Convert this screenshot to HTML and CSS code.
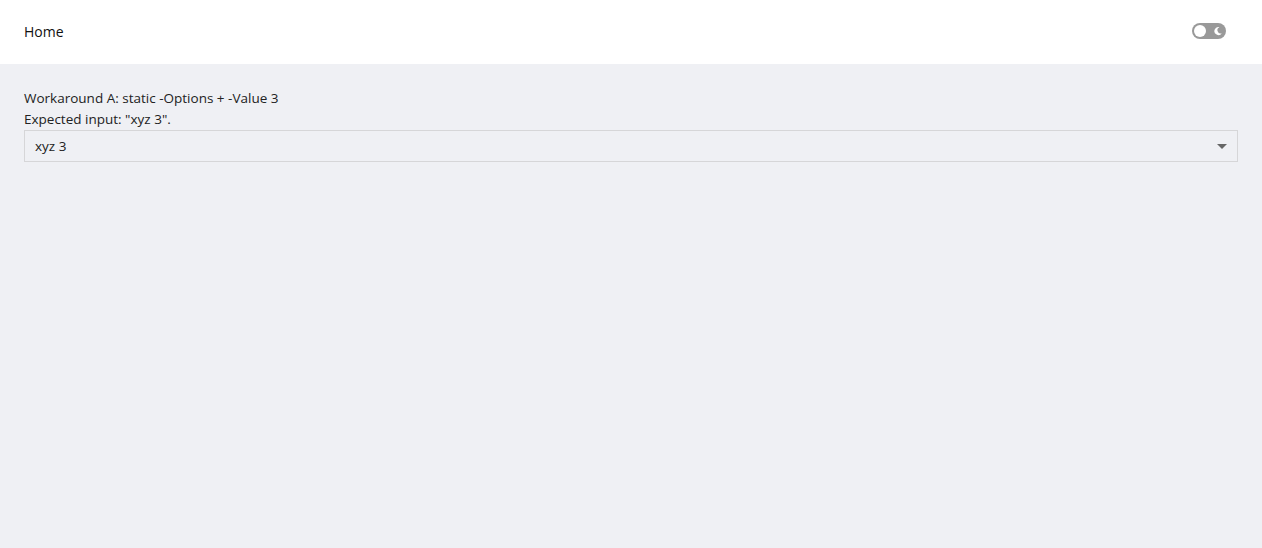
FILE: index.html
```html
<!DOCTYPE html>
<html>
<head>
<meta charset="utf-8">
<link rel="stylesheet" href="styles.css">
</head>
<body>
<header class="topbar">
  <span class="title">Home</span>
  <span class="toggle">
    <span class="knob"></span>
    <svg class="moon" width="10" height="10" viewBox="0 0 10 10"><path d="M6.5 1.2A4 4 0 1 0 8.8 7.2 3.2 3.2 0 0 1 6.5 1.2Z" fill="#fff"/></svg>
  </span>
</header>
<main class="content">
  <div class="label">Workaround A: static -Options + -Value 3</div>
  <div class="label">Expected input: "xyz 3".</div>
  <div class="select">
    <span class="value">xyz 3</span>
    <span class="caret"></span>
  </div>
</main>
</body>
</html>
```
FILE: styles.css
```css
html, body {
  margin: 0;
  padding: 0;
  height: 100%;
}
body {
  background: #eff0f4;
  font-family: "Open Sans", "Noto Sans", sans-serif;
  font-size: 13.5px;
  color: #222;
}
.topbar {
  height: 64px;
  background: #fff;
  display: flex;
  align-items: center;
  justify-content: space-between;
  padding: 0 36px 2px 24px;
  box-sizing: border-box;
}
.title {
  color: #111;
  font-size: 14px;
}
.toggle {
  width: 34px;
  height: 16px;
  border-radius: 8px;
  background: #999;
  display: flex;
  align-items: center;
  justify-content: space-between;
  padding: 0 3px 0 2px;
  box-sizing: border-box;
}
.knob {
  width: 12px;
  height: 12px;
  border-radius: 50%;
  background: #fff;
}
.moon {
  display: block;
}
.content {
  padding: 24px 24px;
}
.label {
  line-height: 21px;
}
.select {
  height: 32px;
  box-sizing: border-box;
  border: 1px solid #d6d6d8;
  display: flex;
  align-items: center;
  justify-content: space-between;
  padding: 0 10px 0 10px;
}
.caret {
  width: 0;
  height: 0;
  border-left: 5px solid transparent;
  border-right: 5px solid transparent;
  border-top: 5px solid #666;
}
```
